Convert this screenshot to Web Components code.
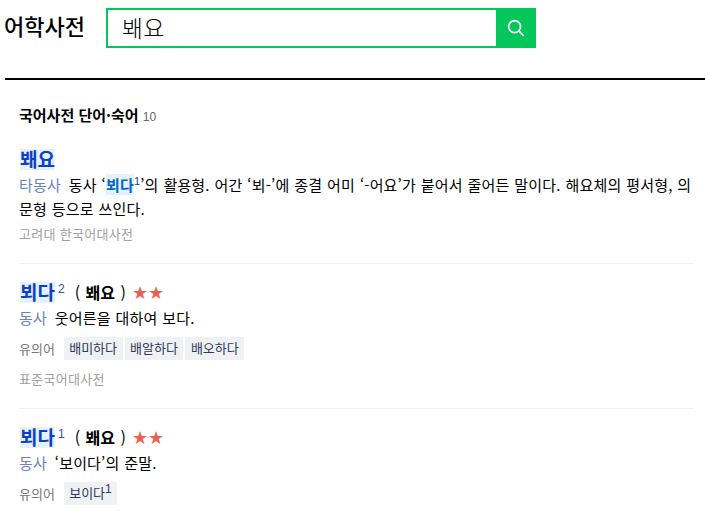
<!DOCTYPE html>
<html lang="ko">
<head>
<meta charset="utf-8">
<title>어학사전</title>
<style>
html, body { margin: 0; background: #fff; }
body { font-family: "Noto Sans CJK KR", "Liberation Sans", sans-serif; color: #000; overflow: hidden; }
</style>
</head>
<body>
<dict-header query="봬요"></dict-header>
<dict-section title="국어사전 단어·숙어" count="10">
  <dict-entry word="봬요" source="고려대 한국어대사전">
    <span slot="pos">타동사</span>
    동사 ‘<dict-ref sup="1">뵈다</dict-ref>’의 활용형. 어간 ‘뵈-’에 종결 어미 ‘-어요’가 붙어서 줄어든 말이다. 해요체의 평서형, 의문형 등으로 쓰인다.
  </dict-entry>
  <dict-entry word="뵈다" sup="2" hanja="봬요" stars source="표준국어대사전" syn="배미하다,배알하다,배오하다">
    <span slot="pos">동사</span>
    웃어른을 대하여 보다.
  </dict-entry>
  <dict-entry word="뵈다" sup="1" hanja="봬요" stars syn="보이다:1" last>
    <span slot="pos">동사</span>
    ‘보이다’의 준말.
  </dict-entry>
</dict-section>
<script>
class DictHeader extends HTMLElement {
    constructor() {
        super();
        this.attachShadow({ mode: 'open' });
    }
    connectedCallback() {
        this.shadowRoot.innerHTML = `
        <style>
        :host { display: block; height: 80px; }
        .top { display: flex; align-items: flex-start; padding: 8px 0 0 4px; height: 78px; box-sizing: border-box; }
        h1 { margin: 0; width: 102px; font-size: 22px; line-height: 34px; font-weight: 500; }
        .box { display: flex; width: 430px; height: 40px; box-sizing: border-box; border: 2px solid #03c75a; }
        .q { flex: 1; padding-left: 14px; font-size: 23px; line-height: 34px; font-weight: 300; }
        .btn { width: 40px; margin: -2px -2px -2px 0; background: #03c75a; display: flex; align-items: center; justify-content: center; }
        .line { height: 2px; background: #000; margin-left: 5px; }
        </style>
        <div class="top">
            <h1>어학사전</h1>
            <div class="box">
                <div class="q">${this.getAttribute('query')}</div>
                <div class="btn">
                    <svg width="18" height="18" viewBox="0 0 18 18" fill="none" stroke="#fff" stroke-width="1.7">
                        <circle cx="7.6" cy="7.6" r="6"/>
                        <path d="M12 12l4.2 4.4" stroke-linecap="round"/>
                    </svg>
                </div>
            </div>
        </div>
        <div class="line"></div>
        `;
    }
}
class DictSection extends HTMLElement {
    constructor() {
        super();
        this.attachShadow({ mode: 'open' });
    }
    connectedCallback() {
        this.shadowRoot.innerHTML = `
        <style>
        :host { display: block; padding: 25px 11px 0 19px; }
        h2 { margin: 0 0 21px; font-size: 15px; line-height: 20px; font-weight: 700; }
        small { font-family: "Liberation Sans", sans-serif; font-size: 12px; font-weight: 400; color: #666; }
        </style>
        <h2>${this.getAttribute('title')} <small>${this.getAttribute('count')}</small></h2>
        <slot></slot>
        `;
    }
}
class DictRef extends HTMLElement {
    constructor() {
        super();
        this.attachShadow({ mode: 'open' });
    }
    connectedCallback() {
        this.shadowRoot.innerHTML = `<style>
        :host { display: inline; }
        b { color: #0068c8; background: #e3f2fe; font-weight: 700; }
        sup { font-family: "Liberation Sans", sans-serif; font-size: 11px; line-height: 0; color: #0b3fc4; }
        </style><b><slot></slot></b><sup>${this.getAttribute('sup')}</sup>`;
    }
}
class DictEntry extends HTMLElement {
    constructor() {
        super();
        this.attachShadow({ mode: 'open' });
    }
    getHead() {
        const sup = this.getAttribute('sup');
        const hanja = this.getAttribute('hanja');
        return `
            <div class="head">
                <span class="word">${this.getAttribute('word')}</span>
                ${sup ? `<sup>${sup}</sup>` : ''}
                ${hanja ? `<span class="hanja">( <b>${hanja}</b> )</span>` : ''}
                ${this.hasAttribute('stars') ? `<span class="stars">★★</span>` : ''}
            </div>`;
    }
    getSyn() {
        const syn = this.getAttribute('syn');
        if (!syn) return '';
        const tags = syn.split(',').map(s => {
            const [w, n] = s.split(':');
            return `<span class="tag">${w}${n ? `<sup>${n}</sup>` : ''}</span>`;
        }).join('');
        return `<div class="syn"><span class="lbl">유의어</span>${tags}</div>`;
    }
    connectedCallback() {
        const source = this.getAttribute('source');
        this.shadowRoot.innerHTML = `
        <style>
        :host { display: block; font-size: 15px; line-height: 24px; padding-bottom: 18px; margin-bottom: 17px; border-bottom: 1px solid #f0f1f2; }
        :host([last]) { border-bottom: 0; margin-bottom: 0; }
        .head { height: 24px; display: flex; align-items: center; line-height: 24px; margin-bottom: 1px; }
        .word { font-size: 19px; font-weight: 700; color: #0b3fc4; background: #e3f2fe; height: 21px; line-height: 19px; margin: -1px 0 0 1px; }
        .head sup { font-family: "Liberation Sans", sans-serif; font-size: 12px; line-height: 12px; color: #2a4fc0; margin: -9px 0 0 3px; }
        .hanja { font-size: 16px; line-height: 22px; margin: -2px 0 0 10px; word-spacing: 1px; }
        .stars { font-family: "DejaVu Sans", sans-serif; font-size: 18px; color: #e8604f; margin-left: 6px; }
        .def { letter-spacing: .17px; word-spacing: .5px; }
        ::slotted([slot=pos]) { color: #6a7fc9; margin-right: 3px; }
        .syn { display: flex; align-items: center; gap: 2px; margin-top: 7px; font-size: 13px; height: 23px; }
        .lbl { color: #777; margin-right: 6.5px; letter-spacing: .1px; }
        .tag { background: #f0f1f3; color: #30395a; padding: 0 5.5px; height: 23px; line-height: 21px; }
        .tag sup { font-family: "Liberation Sans", sans-serif; font-size: 12px; line-height: 0; }
        .src { margin-top: ${this.hasAttribute('syn') ? 10 : 4}px; font-size: 13px; height: 20px; line-height: 18px; letter-spacing: .3px; color: #a0a0a0; }
        </style>
        ${this.getHead()}
        <div class="def"><slot name="pos"></slot><slot></slot></div>
        ${this.getSyn()}
        ${source ? `<div class="src">${source}</div>` : ''}
        `;
    }
}
customElements.define('dict-header', DictHeader);
customElements.define('dict-section', DictSection);
customElements.define('dict-ref', DictRef);
customElements.define('dict-entry', DictEntry);
</script>
</body>
</html>
